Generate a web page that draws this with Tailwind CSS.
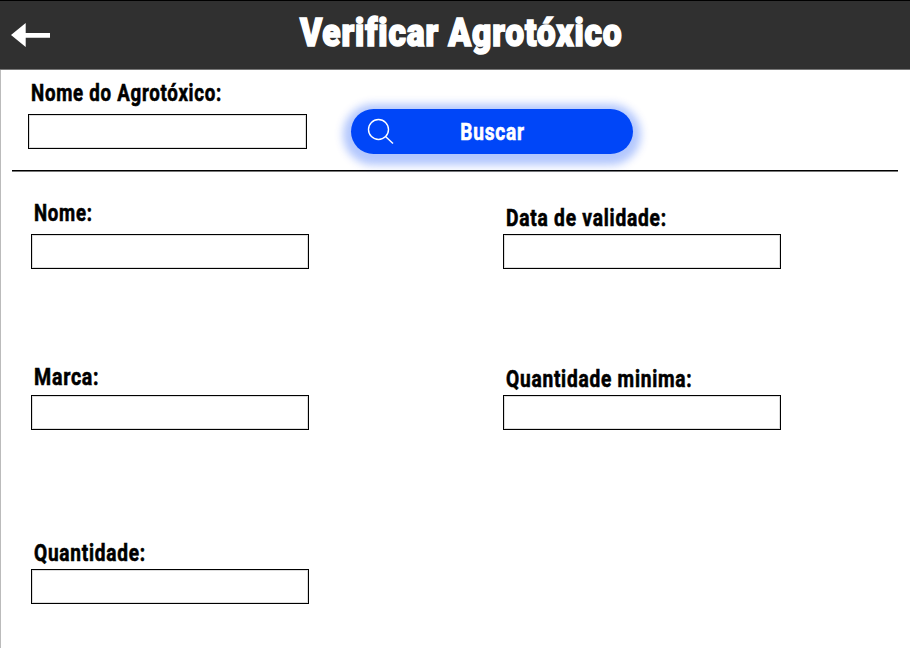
<!DOCTYPE html>
<html lang="pt-BR">
<head>
<meta charset="utf-8">
<title>Verificar Agrotóxico</title>
<script src="https://cdn.jsdelivr.net/npm/@tailwindcss/browser@4"></script>
</head>
<body class="w-[910px] h-[648px] overflow-hidden bg-white font-[Roboto,sans-serif] text-black">
<header class="flex h-[70px] items-start border-t border-t-black border-b border-b-[#777] bg-[#303030]">
  <svg class="ml-[11px] mt-[21px] h-[26px] w-[40px] shrink-0" viewBox="0 0 40 26" fill="#fff"><path d="M0 13 14.7 1V11H39V15.7H14.7V25Z"/></svg>
  <h1 class="ml-[249px] mt-[10px] origin-left scale-x-[.883] whitespace-nowrap text-[38px] leading-[44px] font-black tracking-[1px] text-white [-webkit-text-stroke:1.6px_#fff]">Verificar Agrotóxico</h1>
</header>
<main class="h-[578px] border-l border-[#bbb]">
  <section class="flex h-[100px] pl-[27px]">
    <div class="w-[279px] pt-[9px]">
      <label for="busca" class="ml-[3px] block h-[35px] origin-left scale-x-[.778] whitespace-nowrap text-[24px] leading-[28px] font-bold tracking-[.95px] [-webkit-text-stroke:.6px_#000]">Nome do Agrotóxico:</label>
      <input id="busca" class="block h-[35px] w-[279px] border border-black bg-white shadow-[inset_0_0_0_1px_#ddd] outline-none">
    </div>
    <button class="relative ml-[44px] mt-[39px] flex h-[45px] w-[282px] items-center justify-center rounded-full bg-[#0046f8] shadow-[0_3px_9px_8px_#0046f84d]">
      <svg class="absolute left-[15.5px] top-[9px] size-[28px]" viewBox="0 0 28 28" fill="none" stroke="#fff" stroke-width="1.4"><circle cx="11.5" cy="11.5" r="10"/><path d="m18.5 18.5 7.5 7"/></svg>
      <span class="inline-block scale-x-[.795] text-[24px] leading-[28px] font-bold tracking-[.95px] text-white [-webkit-text-stroke:.6px_#fff]">Buscar</span>
    </button>
  </section>
  <hr class="ml-[11px] w-[886px] border-t border-black shadow-[0_1px_0_#777]">
  <section class="grid grid-cols-[472px_278px] grid-rows-[161px_174px_120px] pl-[30px] pt-[28px]">
    <div class="flex flex-col">
      <label for="nome" class="ml-[3px] h-[35px] origin-left scale-x-[.775] text-[24px] leading-[28px] font-bold tracking-[.95px] [-webkit-text-stroke:.6px_#000]">Nome:</label>
      <input id="nome" class="h-[35px] w-[278px] border border-black shadow-[inset_0_0_0_1px_#ddd] outline-none">
    </div>
    <div class="flex flex-col pt-[5px]">
      <label for="validade" class="ml-[3px] h-[30px] origin-left scale-x-[.8] whitespace-nowrap text-[24px] leading-[28px] font-bold tracking-[.95px] [-webkit-text-stroke:.6px_#000]">Data de validade:</label>
      <input id="validade" class="h-[35px] w-[278px] border border-black shadow-[inset_0_0_0_1px_#ddd] outline-none">
    </div>
    <div class="flex flex-col pt-[3px]">
      <label for="marca" class="ml-[3px] h-[32px] origin-left scale-x-[.815] text-[24px] leading-[28px] font-bold tracking-[.95px] [-webkit-text-stroke:.6px_#000]">Marca:</label>
      <input id="marca" class="h-[35px] w-[278px] border border-black shadow-[inset_0_0_0_1px_#ddd] outline-none">
    </div>
    <div class="flex flex-col pt-[5px]">
      <label for="minima" class="ml-[3px] h-[30px] origin-left scale-x-[.797] whitespace-nowrap text-[24px] leading-[28px] font-bold tracking-[.95px] [-webkit-text-stroke:.6px_#000]">Quantidade minima:</label>
      <input id="minima" class="h-[35px] w-[278px] border border-black shadow-[inset_0_0_0_1px_#ddd] outline-none">
    </div>
    <div class="flex flex-col pt-[5px]">
      <label for="quantidade" class="ml-[3px] h-[30px] origin-left scale-x-[.795] text-[24px] leading-[28px] font-bold tracking-[.95px] [-webkit-text-stroke:.6px_#000]">Quantidade:</label>
      <input id="quantidade" class="h-[35px] w-[278px] border border-black shadow-[inset_0_0_0_1px_#ddd] outline-none">
    </div>
  </section>
</main>
</body>
</html>
